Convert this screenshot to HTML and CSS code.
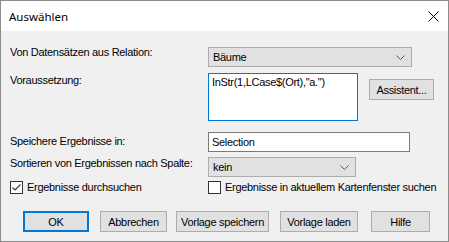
FILE: index.html
```html
<!DOCTYPE html>
<html>
<head>
	<meta charset="utf-8" />
	<title>Auswählen</title>
	<link rel="stylesheet" href="styles.css">
</head>
<body>
	<div class="window">
		<div class="titlebar">
			<span class="title">Auswählen</span>
			<svg class="close" width="11" height="11" viewBox="0 0 11 11">
				<path d="M0.5 0.5 L10.5 10.5 M10.5 0.5 L0.5 10.5" stroke="#000" stroke-width="1" fill="none" />
			</svg>
		</div>

		<div class="content">
			<div class="row row1">
				<label class="label">Von Datensätzen aus Relation:</label>
				<div class="select wide">
					<span>Bäume</span>
					<svg class="chevron" width="9" height="5" viewBox="0 0 9 5"><path d="M0.5 0.5 L4.5 4.5 L8.5 0.5" stroke="#555" fill="none" /></svg>
				</div>
			</div>

			<div class="row row2">
				<label class="label">Voraussetzung:</label>
				<div class="textarea">InStr(1,LCase$(Ort),"a.")</div>
				<button class="btn assist">Assistent...</button>
			</div>

			<div class="row row3">
				<label class="label">Speichere Ergebnisse in:</label>
				<div class="input">Selection</div>
			</div>

			<div class="row row4">
				<label class="label">Sortieren von Ergebnissen nach Spalte:</label>
				<div class="select narrow">
					<span>kein</span>
					<svg class="chevron" width="9" height="5" viewBox="0 0 9 5"><path d="M0.5 0.5 L4.5 4.5 L8.5 0.5" stroke="#555" fill="none" /></svg>
				</div>
			</div>

			<div class="row row5">
				<div class="check first">
					<span class="box">
						<svg width="11" height="11" viewBox="0 0 11 11"><path d="M1.5 5.5 L4 8 L9.5 2.5" stroke="#333" stroke-width="1.1" fill="none" /></svg>
					</span>
					<span>Ergebnisse durchsuchen</span>
				</div>
				<div class="check">
					<span class="box"></span>
					<span>Ergebnisse in aktuellem Kartenfenster suchen</span>
				</div>
			</div>

			<div class="row buttons">
				<button class="btn ok">OK</button>
				<button class="btn cancel">Abbrechen</button>
				<button class="btn save">Vorlage speichern</button>
				<button class="btn load">Vorlage laden</button>
				<button class="btn help">Hilfe</button>
			</div>
		</div>
	</div>
</body>
</html>
```

FILE: styles.css
```css
*{
	margin: 0;
	padding: 0;
	box-sizing: border-box;
}
body{
	background: #ffffff;
	font-family: "Liberation Sans", Arial, sans-serif;
	font-size: 11px;
	letter-spacing: -0.3px;
	color: #000000;
}
.window{
	width: 449px;
	height: 242px;
	border: 1px solid #8c8c8c;
	display: flex;
	flex-direction: column;
	background: #f0f0f0;
	overflow: hidden;
}
.titlebar{
	height: 30px;
	background: #ffffff;
	display: flex;
	align-items: center;
	justify-content: space-between;
	padding: 0 9px 0 8px;
	flex-shrink: 0;
}
.title{
	font-family: "Noto Sans", "Open Sans", sans-serif;
	font-size: 11.5px;
	letter-spacing: 0;
}
.close{
	display: block;
}
.content{
	flex: 1;
	padding-left: 9px;
	white-space: nowrap;
}
.row{
	display: flex;
	align-items: flex-start;
}
.label{
	width: 198px;
	line-height: 13px;
	flex-shrink: 0;
}
.row1{
	margin-top: 15px;
}
.row1 .select{
	margin-top: 1px;
}
.row2{
	margin-top: 6px;
}
.row2 .label{
	margin-top: 1px;
}
.row3{
	margin-top: 11px;
}
.row3 .label{
	margin-top: 3px;
}
.row4{
	margin-top: 5px;
}
.row5{
	margin-top: 4px;
	align-items: center;
}
.buttons{
	margin-top: 17px;
}
.select{
	height: 20px;
	background: #e1e1e1;
	border: 1px solid #adadad;
	display: flex;
	align-items: center;
	justify-content: space-between;
	padding: 0 6px 0 4px;
	line-height: 13px;
}
.select.wide{
	width: 204px;
}
.select.narrow{
	width: 148px;
}
.chevron{
	display: block;
}
.textarea{
	width: 150px;
	height: 48px;
	background: #ffffff;
	border: 1px solid #0078d7;
	padding: 2px 3px;
	line-height: 13px;
}
.input{
	width: 202px;
	height: 20px;
	background: #ffffff;
	border: 1px solid #7a7a7a;
	padding: 3px 3px 0;
	line-height: 13px;
}
.btn{
	height: 21px;
	background: #e1e1e1;
	border: 1px solid #adadad;
	font-family: "Liberation Sans", Arial, sans-serif;
	font-size: 11px;
	letter-spacing: -0.3px;
	color: #000000;
	text-align: center;
	outline: none;
	flex-shrink: 0;
}
.assist{
	width: 65px;
	margin: 6px 0 0 11px;
}
.check{
	display: flex;
	align-items: center;
	line-height: 13px;
}
.check.first{
	width: 198px;
	flex-shrink: 0;
}
.box{
	width: 13px;
	height: 13px;
	border: 1px solid #333333;
	background: #ffffff;
	margin-right: 4px;
	display: flex;
	align-items: center;
	justify-content: center;
	flex-shrink: 0;
}
.box svg{
	display: block;
}
.ok{
	width: 66px;
	margin-left: 13px;
	border: 2px solid #0078d7;
}
.cancel{
	width: 67px;
	margin-left: 11px;
}
.save{
	width: 93px;
	margin-left: 9px;
}
.load{
	width: 78px;
	margin-left: 11px;
}
.help{
	width: 59px;
	margin-left: 13px;
}
```
